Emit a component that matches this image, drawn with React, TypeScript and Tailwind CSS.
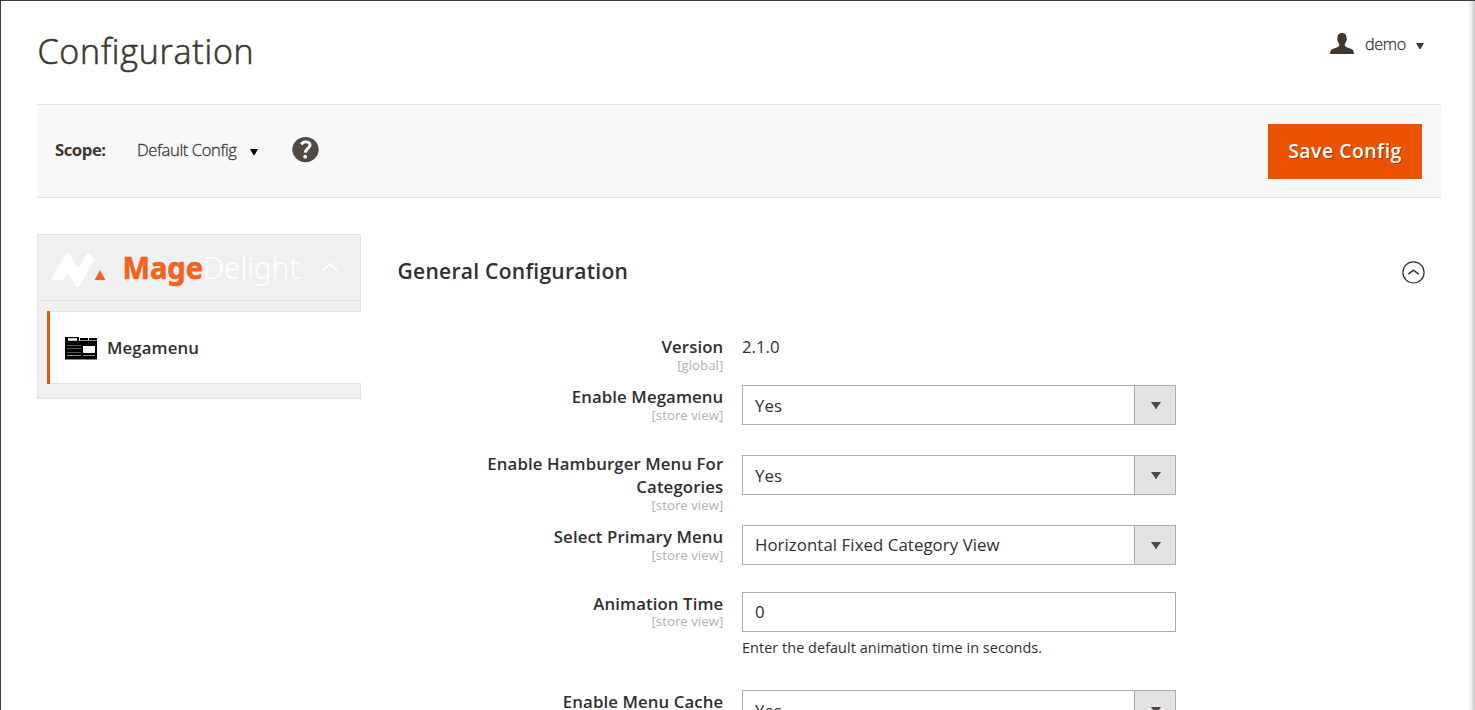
import type { ReactNode } from "react";

function Caret({ className = "" }: { className?: string }) {
  return (
    <svg className={className} width="10" height="7" viewBox="0 0 10 7" fill="currentColor">
      <path d="M0 0H10L9.2 1.2L6.2 5.2L5.8 6.8H4.2L3.8 5.2L0.8 1.2Z" />
    </svg>
  );
}

function SmallCaret({ className = "" }: { className?: string }) {
  return (
    <svg className={className} width="8" height="6" viewBox="0 0 8 6" fill="currentColor">
      <path d="M0 0H8L5 5.2L4.6 6H3.4L3 5.2Z" />
    </svg>
  );
}

function Select({ value, className = "leading-[39px]" }: { value: string; className?: string }) {
  return (
    <div className="flex h-10 w-[434px] border border-[#adadad] bg-white">
      <div className={`flex-1 pl-3 text-[16.8px] tracking-[0.08px] ${className}`}>{value}</div>
      <div className="flex w-[41px] items-center justify-center border-l border-[#adadad] bg-[#e3e3e3] text-[#514943]">
        <Caret className="mt-px ml-0.5" />
      </div>
    </div>
  );
}

interface RowProps {
  label: string;
  scope: string;
  className: string;
  scopeClassName?: string;
  children: ReactNode;
}

function Row({ label, scope, className, scopeClassName = "leading-[14px]", children }: RowProps) {
  return (
    <div className={`flex gap-[18.7px] ${className}`}>
      <div className="flex w-[263.3px] shrink-0 flex-col items-end text-right">
        <div className="text-[16.8px] leading-[23px] font-semibold tracking-[0.1px]">{label}</div>
        <div className={`text-[13.2px] tracking-[0.04px] text-[#b0b0b0] ${scopeClassName}`}>{scope}</div>
      </div>
      <div>{children}</div>
    </div>
  );
}

function Header() {
  return (
    <header className="flex h-[103px] justify-between pr-[17px]">
      <h1 className="pt-[27px] pl-[0.5px] text-[34px] leading-[46px] font-light tracking-[0.76px] text-[#41362f] [-webkit-text-stroke:0.6px_#41362f]">
        Configuration
      </h1>
      <div className="flex h-[86px] items-center text-[#41362f]">
        <svg className="-mt-px mr-[11px]" width="24" height="21" viewBox="0 0 24 21" fill="currentColor">
          <path d="M12 0C15 0 16.5 1.7 16.5 4.2V5.3C17.2 5.5 16.9 8 16.1 8.3C15.9 9.7 15.2 10.5 14.8 11.1V13.1C16.5 14.8 20.8 15.5 22.6 16.8C23.7 17.6 23.8 19 24 21H0C0.2 19 0.3 17.6 1.4 16.8C3.2 15.5 7.5 14.8 9.2 13.1V11.1C8.8 10.5 8.1 9.7 7.9 8.3C7.1 8 6.8 5.5 7.5 5.3V4.2C7.5 1.7 9 0 12 0Z" />
        </svg>
        <span className="text-[16.2px] font-light tracking-[-0.3px] [-webkit-text-stroke:0.3px_#41362f]">demo</span>
        <SmallCaret className="mt-[3px] ml-[10px]" />
      </div>
    </header>
  );
}

function Toolbar() {
  return (
    <div className="flex h-[94px] items-center justify-between border-y border-[#e3e3e3] bg-[#f8f8f8] pr-[19px] pl-[18px] text-[#41362f]">
      <div className="flex items-center pb-[2px]">
        <span className="w-[82px] text-[16.8px] leading-6 font-bold tracking-[-0.5px]">Scope:</span>
        <span className="w-[101px] text-[16.6px] leading-6 font-light tracking-[-0.4px] whitespace-nowrap [-webkit-text-stroke:0.3px_#41362f]">
          Default Config
        </span>
        <SmallCaret className="mt-1 ml-3 text-black" />
        <svg className="-mt-px ml-[34px]" width="27" height="26" viewBox="0 0 27 26">
          <ellipse cx="13.5" cy="12.6" rx="13.2" ry="12.6" fill="#514943" />
          <path d="M9.2 7.2C10.8 5.3 12.4 4.7 14 4.8C16.6 4.9 18.1 6.2 18 8.3C17.9 11.3 13.6 11.6 13.3 15.7" fill="none" stroke="#fff" strokeWidth="3" />
          <circle cx="13.2" cy="19.7" r="1.9" fill="#fff" />
        </svg>
      </div>
      <button className="h-[55px] w-[154px] bg-[#eb5202] text-[19.4px] font-semibold tracking-[0.5px] text-white [text-shadow:1px_1px_0_rgba(0,0,0,0.3)]">
        Save Config
      </button>
    </div>
  );
}

function Sidebar() {
  return (
    <aside className="h-[165px] w-[324px] shrink-0 border border-[#e3e3e3] bg-[#f0f0f0]">
      <div className="flex h-[66px] items-center border-b border-[#e3e3e3]">
        <svg className="ml-3 mt-[5px]" width="58" height="38" viewBox="0 0 58 38">
          <path d="M0.5 29L15.5 3.2Q17.5 1.3 19.5 3.2L28.5 17.5L36.5 3.2Q38.6 1.3 40.8 3.2L44.3 9L29.5 34.8Q27.4 36.6 25.5 34.8L17.7 21.7L13 29Z" fill="#fff" />
          <path d="M50 19L55.4 29H44.6Z" fill="#f26322" />
        </svg>
        <svg className="ml-[14px]" width="190" height="46" viewBox="0 0 190 46" fontFamily="'Noto Sans', sans-serif">
          <text x="0.5" y="34" fontSize="31" fontWeight="700" fill="#f26322" stroke="#f26322" strokeWidth="0.7" textLength="80.5" lengthAdjust="spacingAndGlyphs">Mage</text>
          <text x="81" y="34" fontSize="31" fontWeight="300" fill="#fff" stroke="#fff" strokeWidth="0.2" textLength="96.5" lengthAdjust="spacingAndGlyphs">Delight</text>
        </svg>
        <svg className="ml-[10px] -mt-px" width="16" height="10" viewBox="0 0 16 10" fill="none" stroke="#fff" strokeWidth="2.2">
          <path d="M1 8.5L8 2L15 8.5" />
        </svg>
      </div>
      <div className="mt-[10px] -mr-px ml-[9px] flex h-[73px] items-center border-l-[3px] border-[#eb5202] bg-white">
        <div className="flex h-[73px] flex-1 items-center border-y border-[#e3e3e3] pl-[15px]">
          <svg className="mt-px" width="32" height="23" viewBox="0 0 32 23" shapeRendering="crispEdges">
            <path d="M0 0H14V4H32V22H0Z" fill="#000" />
            <path d="M15 1H23V3H15ZM24 1H32V3H24Z" fill="#000" />
            <path d="M15 3H32V4H15ZM2 18H16V19H2ZM18 18H30V19H18ZM0 22H32V23H0Z" fill="#888" />
            <path d="M2 8H16V9H2ZM2 11H16V12H2ZM2 15H16V16H2Z" fill="#555" />
            <path d="M3 1H12V4H3ZM18 9H30V16H18Z" fill="#fff" />
            <path d="M3 1H12V2H3ZM3 3H12V4H3Z" fill="#bbb" />
          </svg>
          <span className="ml-[10px] text-[16.8px] font-semibold tracking-[0.1px]">Megamenu</span>
        </div>
      </div>
    </aside>
  );
}

function Settings() {
  return (
    <section className="flex-1 pr-4 pl-[36.5px]">
      <div className="flex h-[76px] items-center justify-between">
        <h2 className="-mt-[3px] text-[21px] leading-[30px] font-semibold tracking-[0.28px]">General Configuration</h2>
        <svg width="24" height="24" viewBox="0 0 24 24" fill="none" stroke="#303030">
          <circle cx="12.5" cy="12.4" r="10.6" strokeWidth="1.2" />
          <path d="M7.3 14.1L12.5 10.2L17.7 14.1" strokeWidth="1.4" />
        </svg>
      </div>
      <div className="pt-[25px] pl-[62.5px]">
        <Row label="Version" scope="[global]" className="h-[50px]">
          <div className="text-[16.8px] leading-[23px]">2.1.0</div>
        </Row>
        <Row label="Enable Megamenu" scope="[store view]" className="h-[67px]">
          <Select value="Yes" />
        </Row>
        <Row label="Enable Hamburger Menu For Categories" scope="[store view]" className="h-[73px]">
          <div className="pt-[3px]">
            <Select value="Yes" />
          </div>
        </Row>
        <Row label="Select Primary Menu" scope="[store view]" className="h-[67px]">
          <Select value="Horizontal Fixed Category View" className="leading-[37px]" />
        </Row>
        <Row label="Animation Time" scope="[store view]" className="h-[98px]" scopeClassName="leading-[12px]">
          <div className="h-10 w-[434px] border border-[#adadad] pl-3 text-[16.8px] leading-[37px]">0</div>
          <p className="mt-[6px] text-[14.4px] leading-5 tracking-[0.07px]">Enter the default animation time in seconds.</p>
        </Row>
        <Row label="Enable Menu Cache" scope="[store view]" className="h-[67px]">
          <Select value="Yes" />
        </Row>
      </div>
    </section>
  );
}

export default function App() {
  return (
    <div className="relative h-[710px] w-[1475px] overflow-hidden border-t border-l border-[#41393a] bg-white pr-[34px] pl-9 font-['Open_Sans',sans-serif] text-[#303030]">
      <Header />
      <Toolbar />
      <main className="flex pt-9">
        <Sidebar />
        <Settings />
      </main>
      <div className="absolute inset-y-0 right-0 w-2 bg-linear-to-r from-transparent via-[#cccccc]/30 to-[#c4c4c4]" />
    </div>
  );
}
